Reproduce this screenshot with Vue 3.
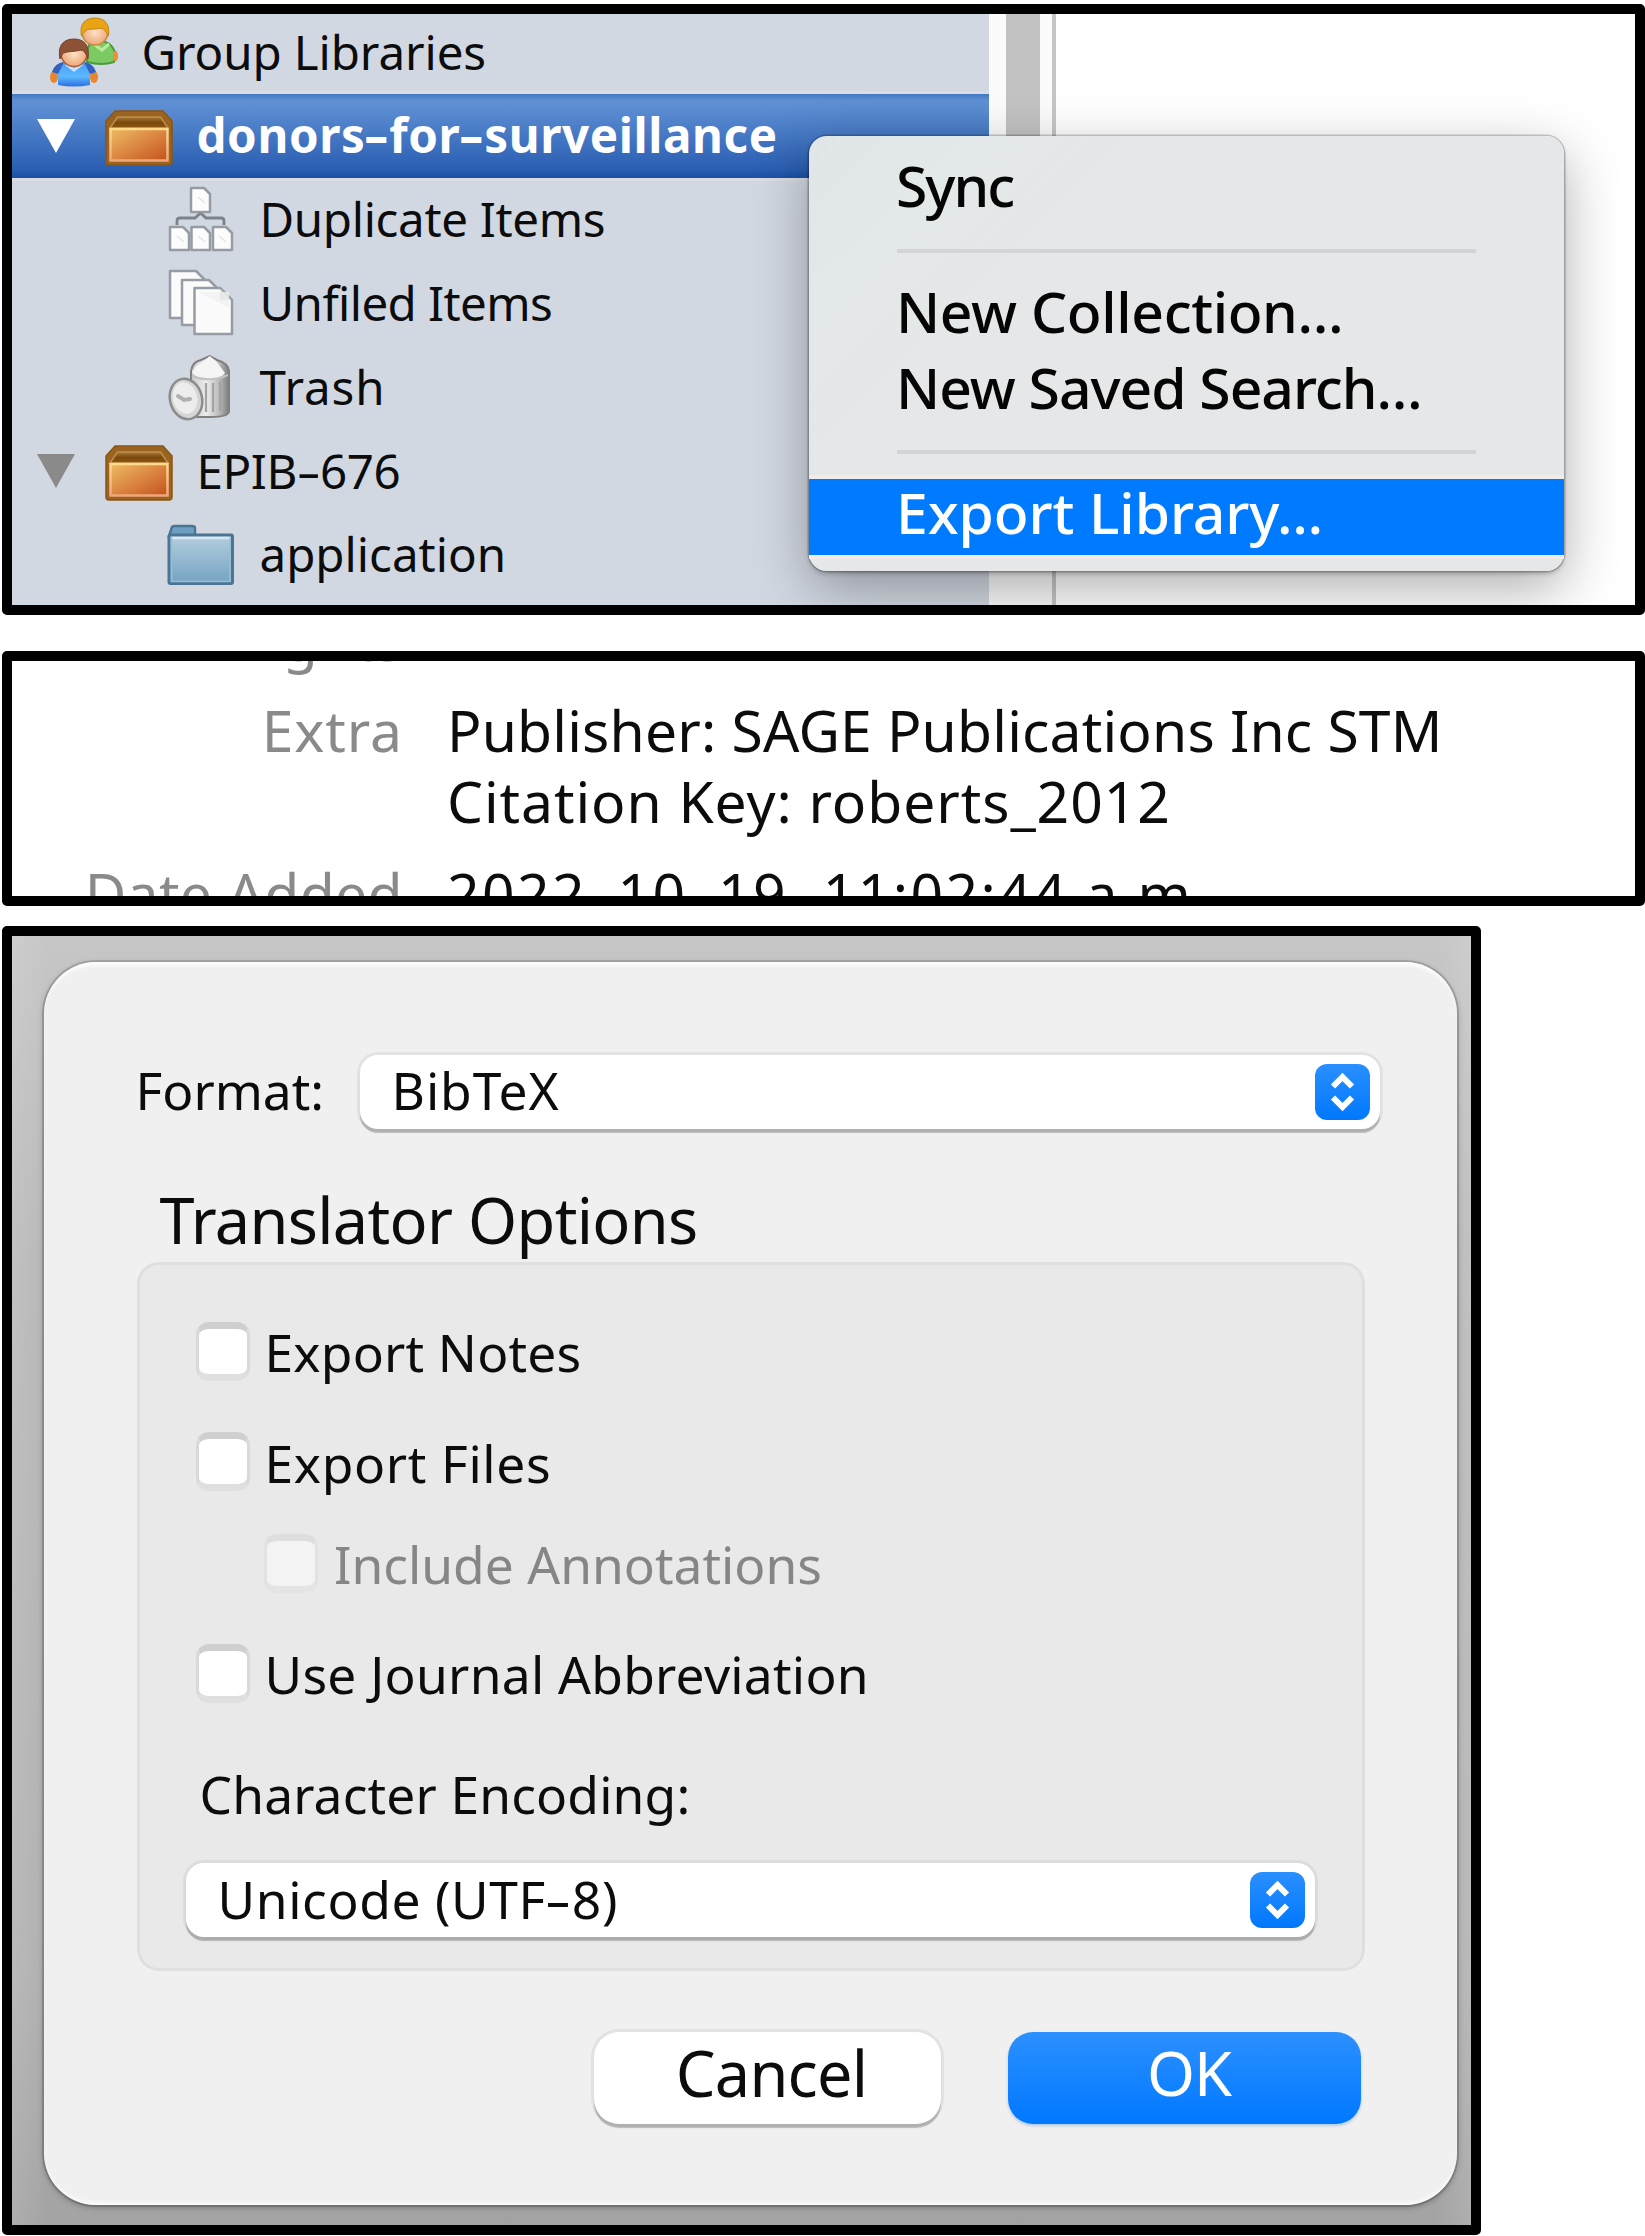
<script setup>
const tree = [
  { label: 'Group Libraries', icon: 'people', level: 0, ls: -0.1 },
  { label: 'donors-for-surveillance', icon: 'box', level: 1, open: true, selected: true, ls: 0.6 },
  { label: 'Duplicate Items', icon: 'dupes', level: 2, ls: -0.33 },
  { label: 'Unfiled Items', icon: 'unfiled', level: 2, ls: -0.6 },
  { label: 'Trash', icon: 'trash', level: 2, ls: 0.9 },
  { label: 'EPIB-676', icon: 'box', level: 1, open: true, ls: -0.4 },
  { label: 'application', icon: 'folder', level: 2, ls: 0 }
]
const menu = [
  { label: 'Sync', ls: -2 },
  { sep: true },
  { label: 'New Collection…', ls: -0.39 },
  { label: 'New Saved Search…', ls: -1.02 },
  { sep: true },
  { label: 'Export Library…', ls: -0.09, active: true }
]
const fields = [
  { name: 'Rights', nls: 0.5, lines: [] },
  { name: 'Extra', nls: 0.9, lines: [{ t: 'Publisher: SAGE Publications Inc STM', ls: 0.18 }, { t: 'Citation Key: roberts_2012', ls: 0.92 }] },
  { name: 'Date Added', nls: 0.35, lines: [{ t: '2022-10-19, 11:02:44 a.m.', ls: 2.4 }] }
]
const options = [
  { label: 'Export Notes', ls: 0.2 },
  { label: 'Export Files', ls: 0.65 },
  { label: 'Include Annotations', ls: 0, sub: true },
  { label: 'Use Journal Abbreviation', ls: 0.26 }
]
const px = (n) => ({ letterSpacing: n + 'px' })
</script>

<template>
  <main class="page">
    <section class="panel library">
      <ul class="tree">
        <li v-for="row in tree" :key="row.label" :class="['row', 'level' + row.level, { selected: row.selected }]">
          <svg v-if="row.open" class="twisty" viewBox="0 0 40 36"><path d="M1 1H39L20 35Z" /></svg>
          <svg v-if="row.icon === 'people'" class="icon" viewBox="0 0 70 70">
            <defs>
              <linearGradient id="blueShirt" x1="0" y1="0" x2="0" y2="1"><stop offset="0" stop-color="#4a9cf5" /><stop offset=".6" stop-color="#5cb8ff" /><stop offset="1" stop-color="#2a6fe0" /></linearGradient>
              <radialGradient id="skin"><stop offset="0" stop-color="#fde3c8" /><stop offset="1" stop-color="#eda878" /></radialGradient>
            </defs>
            <path d="M39 45C38 30 41 24 50 24C60 24 65 28 68 38L66 45Q54 49 39 45Z" fill="#7ccb62" stroke="#4c9a3c" stroke-width="2" />
            <path d="M47 28L54 33L61 27" fill="none" stroke="#b6eba0" stroke-width="3" />
            <ellipse cx="67.500" cy="39" rx="2.500" ry="5" fill="#e8903a" />
            <circle cx="47" cy="15" r="13" fill="url(#skin)" stroke="#c98a3a" stroke-width="1.500" />
            <path d="M33.500 19C31 6 38 1 47 1C57 1 62 7 60.500 19C58 15 57 12 53 11C46 13 40 11 37 14Z" fill="#e8a414" stroke="#c5850c" stroke-width="1" />
            <ellipse cx="6" cy="60" rx="4" ry="6" fill="#e8862e" />
            <ellipse cx="46" cy="60" rx="4" ry="6" fill="#e8862e" />
            <path d="M4 55Q7 46 16 45H36Q45 46 48 55L42 57L42 68Q26 71 10 68L10 57Z" fill="url(#blueShirt)" />
            <path d="M4 55Q7 46 16 45L10 57ZM48 55Q45 46 36 45L42 57Z" fill="#3560bd" />
            <path d="M18 47L26 53L34 47" fill="none" stroke="#c4e2ff" stroke-width="3" />
            <circle cx="26" cy="36.500" r="13" fill="url(#skin)" stroke="#a8623c" stroke-width="1.500" />
            <path d="M12 42C9 28 16 22 26 22C36 22 42 28 40 42C38 37 37 34 33 33C26 35 20 34 15 36Z" fill="#8e5236" stroke="#74402a" stroke-width="1" />
          </svg>
          <svg v-else-if="row.icon === 'box'" class="icon" viewBox="0 0 70 70">
            <defs>
              <linearGradient id="front" x1="0" y1="0" x2="1" y2="1"><stop offset="0" stop-color="#eebc62" /><stop offset=".5" stop-color="#db8642" /><stop offset="1" stop-color="#c4521c" /></linearGradient>
              <linearGradient id="rim" x1="0" y1="0" x2="0" y2="1"><stop offset="0" stop-color="#ffd98c" /><stop offset="1" stop-color="#f0a67c" /></linearGradient>
              <linearGradient id="lid" x1="0" y1="0" x2="0" y2="1"><stop offset="0" stop-color="#a87838" /><stop offset=".5" stop-color="#7a4a0c" /><stop offset="1" stop-color="#8c5410" /></linearGradient>
            </defs>
            <path d="M12 10H60L69 20V61Q69 64 66 64H6Q3 64 3 61V20Z" fill="#9a6420" stroke="#8a5614" stroke-width="1.500" stroke-linejoin="round" />
            <path d="M14.500 16H57.500L65 27H7Z" fill="url(#lid)" stroke="#c08e4c" stroke-width="1.500" />
            <rect x="7.500" y="28" width="57" height="31.500" fill="url(#front)" stroke="url(#rim)" stroke-width="2.500" />
          </svg>
          <svg v-else-if="row.icon === 'dupes'" class="icon" viewBox="0 0 70 70">
            <path d="M11 40V36Q11 33 14 33H29L34.500 28L40 33H55Q58 33 58 36V40" fill="none" stroke="#7d8188" stroke-width="2.800" />
            <g fill="#fcfcfc" stroke="#969ba5" stroke-width="2.500" stroke-linejoin="round">
              <path d="M25 3H38L44 9V27H25Z" />
              <path d="M4 42H17L23 48V65H4Z" /><path d="M25.500 42H38L44 48V65H25.500Z" /><path d="M47 42H60L66 48V65H47Z" />
            </g>
            <g fill="none" stroke="#e4e5e8" stroke-width="1.500"><path d="M32 12L39 18M11 51L18 57M32 51L39 57M53 51L60 57" /></g>
          </svg>
          <svg v-else-if="row.icon === 'unfiled'" class="icon" viewBox="0 0 70 70">
            <g fill="#fbfbfb" stroke="#969ba5" stroke-width="2.500" stroke-linejoin="round">
              <path d="M4 3H30L39 12V50H4Z" /><path d="M16 12H43L52 21V57H16Z" /><path d="M28.500 20H54L66 32V66H28.500Z" />
            </g>
            <path d="M32 24L63 40V24Z" fill="#f1f1f1" opacity=".8" />
            <path d="M54 21V32H65Z" fill="#e7e8ea" />
          </svg>
          <svg v-else-if="row.icon === 'trash'" class="icon" viewBox="0 0 70 70">
            <defs><linearGradient id="can"><stop offset="0" stop-color="#c9c9c9" /><stop offset=".4" stop-color="#ededed" /><stop offset=".75" stop-color="#b9b9b9" /><stop offset="1" stop-color="#7c7c7c" /></linearGradient></defs>
            <path d="M25 19Q26 10 35 8L43.500 4L51 8Q62 11 63 19V60Q61 65 45 65H30L25 60Z" fill="url(#can)" stroke="#808080" stroke-width="2" />
            <path d="M26 20Q31 12 37 10L43.500 4L50 9L59 21Q55 27 43 27Q30 27 26 20Z" fill="#f5f5f5" />
            <path d="M26 24Q43 31 62 23" fill="none" stroke="#c2c2c2" stroke-width="2" />
            <path d="M40 31V60M47 31V60M54 30V59" stroke="#a3a3a3" stroke-width="2.200" />
            <ellipse cx="20" cy="47" rx="16" ry="20.500" transform="rotate(-14 20 47)" fill="#d6d6d6" stroke="#8c8c8c" stroke-width="2.500" />
            <ellipse cx="19" cy="46" rx="12" ry="16" transform="rotate(-14 19 46)" fill="#ededed" />
            <path d="M12 44L18 48L24 47" fill="none" stroke="#b0b0b0" stroke-width="4" stroke-linecap="round" />
          </svg>
          <svg v-else class="icon" viewBox="0 0 70 70">
            <defs><linearGradient id="folder" x1="0" y1="0" x2="0" y2="1"><stop offset="0" stop-color="#b4cfdf" /><stop offset="1" stop-color="#74a3c2" /></linearGradient></defs>
            <path d="M3 16L6 7Q7 6 9 6H26Q29 6 29 8V16Z" fill="#6f9fc0" stroke="#4a7595" stroke-width="2.500" />
            <rect x="3" y="15" width="63.500" height="48.500" rx="1.500" fill="url(#folder)" stroke="#4a7595" stroke-width="3" />
            <path d="M6 18H63.500" stroke="#d8e8f2" stroke-width="2.500" /><path d="M5.500 18V61.500H64V18" fill="none" stroke="#98bfd6" stroke-width="1.500" />
          </svg>
          <span class="name" :style="px(row.ls)"><template v-for="(p, i) in row.label.split('-')" :key="i"><i v-if="i" class="hy">-</i>{{ p }}</template></span>
        </li>
      </ul>
      <div class="gutter"><div class="thumb"></div></div>
      <div class="menu">
        <template v-for="(m, i) in menu" :key="i">
          <div v-if="m.sep" class="sep"></div>
          <div v-else :class="['mitem', { active: m.active }]" :style="px(m.ls)">{{ m.label }}</div>
        </template>
      </div>
    </section>

    <section class="panel info">
      <dl class="fields">
        <div v-for="f in fields" :key="f.name" class="field">
          <dt :style="px(f.nls)">{{ f.name }}</dt>
          <dd><div v-for="l in f.lines" :key="l.t" :style="px(l.ls)"><template v-for="(p, i) in l.t.split('-')" :key="i"><i v-if="i" class="hy">-</i>{{ p }}</template></div></dd>
        </div>
      </dl>
    </section>

    <section class="panel export">
      <div class="dialog">
        <div class="format">
          <label class="flabel">Format:</label>
          <div class="select wide">
            <span class="value" :style="px(0.9)">BibTeX</span>
            <svg class="stepper" viewBox="0 0 55 56"><path d="M18 22.500L27.500 13L37 22.500M18 33.500L27.500 43L37 33.500" /></svg>
          </div>
        </div>
        <h2 class="heading">Translator Options</h2>
        <div class="group">
          <div v-for="o in options" :key="o.label" :class="['option', { sub: o.sub }]">
            <span class="check"></span><span class="olabel" :style="px(o.ls)">{{ o.label }}</span>
          </div>
          <div class="enc">Character Encoding:</div>
          <div class="select charset">
            <span class="value" :style="px(0.6)">Unicode (UTF<i class="hy">-</i>8)</span>
            <svg class="stepper" viewBox="0 0 55 56"><path d="M18 22.500L27.500 13L37 22.500M18 33.500L27.500 43L37 33.500" /></svg>
          </div>
        </div>
        <div class="buttons">
          <button class="btn cancel">Cancel</button>
          <button class="btn ok">OK</button>
        </div>
      </div>
    </section>
  </main>
</template>

<style>
body { background: #fff; }
</style>

<style scoped>
.page {
  box-sizing: border-box;
  width: 1645px;
  height: 2236px;
  padding: 4px 0 0 2px;
  overflow: hidden;
  font-family: "Noto Sans", sans-serif;
  color: #0c0c0c;
  white-space: nowrap;
}
.panel {
  box-sizing: border-box;
  width: 1643px;
  border: 10px solid #000;
  border-radius: 5px;
  overflow: hidden;
  background: #fff;
}
.hy {
  display: inline-block;
  font-style: normal;
  margin: 0 0.085em;
  transform: scaleX(1.6);
}

/* library tree */
.library { position: relative; display: flex; height: 611px; }
.tree { list-style: none; margin: -3.8px 0 0; padding: 0; width: 977px; height: 610px; background: #d2d8e2; flex: none; }
.row { box-sizing: border-box; display: flex; align-items: center; height: 83.8px; font-size: 47.5px; }
.level0 { padding-left: 36px; }
.level1 { padding-left: 24px; }
.level2 { padding-left: 154px; }
.selected {
  color: #fff;
  font-weight: 700;
  background: linear-gradient(#4378c2 0, #5f90d3 8%, #5c8dd2 16%, #2a5eb2 90%, #1b50a6 100%);
  box-shadow: 0 -3px 0 #d9dce3, 0 3px 0 #d9dce3;
}
.twisty { width: 40px; height: 36px; margin-right: 27px; fill: #8a8a8a; flex: none; }
.selected .twisty { fill: #fff; }
.icon { width: 70px; height: 70px; margin-right: 23.5px; flex: none; }
.name { padding-bottom: 2px; }
.gutter { display: flex; width: 46px; border-right: 4px solid #c6c6c6; background: #fbfbfb; padding-left: 16.5px; }
.thumb { width: 34px; height: 300px; background: #c2c2c2; }

.menu {
  position: absolute;
  left: 797px;
  top: 122px;
  box-sizing: border-box;
  width: 755px;
  height: 435px;
  padding-top: 16px;
  border-radius: 18px;
  background: linear-gradient(135deg, #e0e6e7 0, #e3e8e8 15%, #e5e7e9 30%);
  box-shadow: 0 0 0 1.500px rgba(0, 0, 0, 0.2), 0 3px 4px rgba(0, 0, 0, 0.2), 0 18px 56px rgba(0, 0, 0, 0.32);
  font-size: 57px;
  font-weight: 500;
  color: #050505;
}
.mitem { box-sizing: border-box; height: 76px; line-height: 67px; padding-left: 87px; }
.mitem.active { background: #007aff; color: #fff; box-shadow: 0 -4px 0 #f1ece8, 0 4px 0 #f1ece8; }
.sep { box-sizing: border-box; height: 49.700px; padding: 20.5px 88px 0; }
.sep::before { content: ""; display: block; height: 4px; background: #d3d4d5; }

/* item info */
.info { height: 255px; margin-top: 36px; }
.fields { margin: -57.500px 0 0; font-size: 57px; line-height: 70.700px; }
.field { display: flex; margin-bottom: 21.200px; }
.field dt { width: 391px; text-align: right; color: #8a8a8a; }
.field dd { margin: 0 0 0 44px; }

/* export dialog */
.export {
  width: 1479px;
  height: 1309px;
  margin-top: 20px;
  background: linear-gradient(90deg, rgba(255, 255, 255, 0.12) 0, transparent 2.500%, transparent 97.500%, rgba(255, 255, 255, 0.12)), linear-gradient(#c6c6c6 0, #b8b8b8 25%, #b0b0b0 80%, #a3a3a3 100%);
}
.dialog {
  box-sizing: border-box;
  display: flow-root;
  width: 1413.500px;
  height: 1243px;
  margin: 26px 0 0 31.500px;
  padding-top: 92.500px;
  border-radius: 52px;
  background: #f0f0f0;
  box-shadow: 0 0 0 2px rgba(0, 0, 0, 0.14), 0 2px 6px rgba(0, 0, 0, 0.3), inset 0 5px 4px -2px #fff, inset 0 -4px 4px -2px #fff;
  font-size: 51.500px;
}
.format { display: flex; align-items: center; height: 74px; padding-left: 92px; }
.flabel { width: 224px; padding-bottom: 3px; }
.select {
  box-sizing: border-box;
  display: flex;
  align-items: center;
  justify-content: space-between;
  height: 74px;
  padding: 0 10px 0 32px;
  border-radius: 18px;
  background: #fff;
  box-shadow: 0 0 0 3px rgba(0, 0, 0, 0.055), 0 3.500px 1px rgba(0, 0, 0, 0.22);
}
.value { padding-bottom: 3px; }
.wide { width: 1020px; }
.stepper { width: 55px; height: 56px; border-radius: 12px; background: linear-gradient(#2a8fff, #0078fc); fill: none; stroke: #fff; stroke-width: 6; }
.heading { margin: 53.500px 0 4px 116px; font-size: 63px; line-height: 76px; font-weight: 400; letter-spacing: -0.67px; }
.group {
  box-sizing: border-box;
  width: 1228px;
  height: 709px;
  margin-left: 93px;
  padding: 57px 0 0 56px;
  border: 3px solid #dfdfdf;
  border-radius: 22px;
  background: #e9e9e9;
}
.option { display: flex; align-items: center; height: 58px; line-height: 58px; margin-bottom: 52.500px; }
.olabel { padding-top: 2px; }
.check {
  box-sizing: border-box;
  width: 54px;
  height: 59px;
  margin-right: 15px;
  border: solid #d9d9d9;
  border-width: 7px 3.5px;
  border-top-color: #cfcfcf;
  border-bottom-color: #dfdfdf;
  border-radius: 13px;
  background: #fff;
}
.option.sub { margin: -9px 0 52px 68.500px; color: #868686; }
.sub .check { margin-right: 16px; background: #f3f3f3; border-color: #dedede #e2e2e2 #e4e4e4; }
.option:nth-child(4) { margin-bottom: 0; }
.enc { margin: 61.500px 0 39.500px 4px; line-height: 60px; letter-spacing: 0.15px; }
.charset { width: 1129px; margin-left: -10px; }
.buttons { display: flex; gap: 67px; margin: 60.500px 0 0 550px; }
.btn {
  box-sizing: border-box;
  width: 347px;
  height: 92.500px;
  padding: 0 0 11px;
  border: 0;
  border-radius: 25px;
  background: #fff;
  box-shadow: 0 0 0 3px rgba(0, 0, 0, 0.055), 0 3.500px 1px rgba(0, 0, 0, 0.22);
  font: 400 63px/81px "Noto Sans", sans-serif;
  letter-spacing: -0.8px;
  color: #0c0c0c;
}
.cancel { padding-left: 9px; }
.ok { width: 353px; background: linear-gradient(#2c90ff, #0078ff); color: #fff; box-shadow: 0 2px 3px rgba(0, 90, 220, 0.25); font-size: 61.500px; letter-spacing: -1px; padding-left: 10px; }
</style>
